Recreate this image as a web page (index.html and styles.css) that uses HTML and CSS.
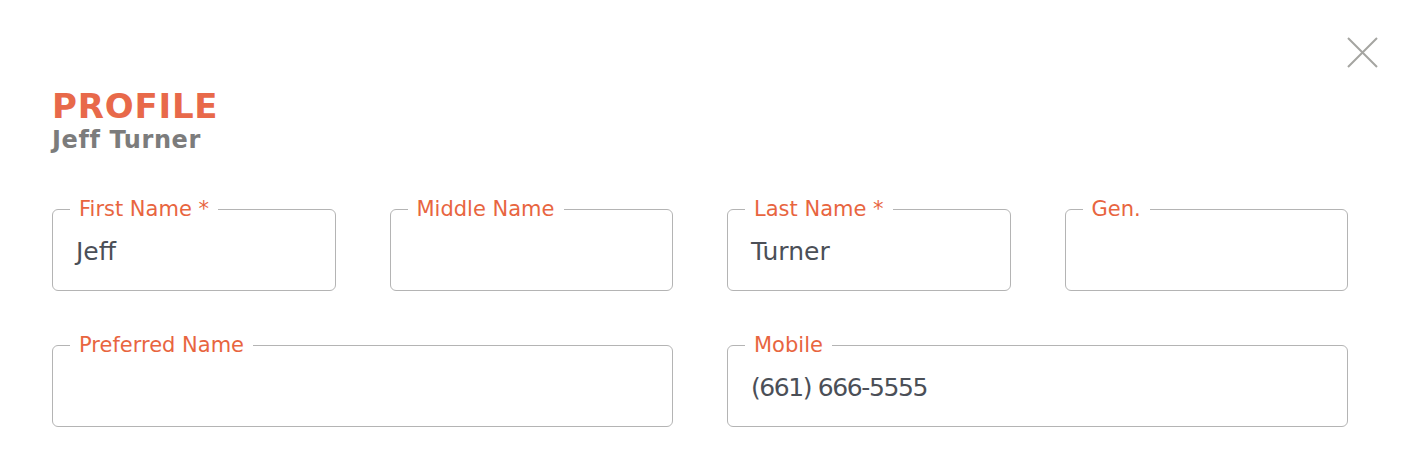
FILE: index.html
```html
<!DOCTYPE html>
<html lang="en">
<head>
<meta charset="utf-8">
<title>Profile</title>
<link rel="stylesheet" href="styles.css">
</head>
<body>
<div class="modal">
  <header class="modal-header">
    <div class="titles">
      <h1 class="title">PROFILE</h1>
      <h2 class="subtitle">Jeff Turner</h2>
    </div>
    <button class="close" type="button" aria-label="Close">
      <svg width="31" height="31" viewBox="0 0 31 31" aria-hidden="true">
        <path d="M1 1 L30 30 M30 1 L1 30" stroke="#a5a5a1" stroke-width="2" fill="none"/>
      </svg>
    </button>
  </header>
  <form class="form-grid">
    <fieldset class="field">
      <legend class="field-label">First Name *</legend>
      <div class="field-value">Jeff</div>
    </fieldset>
    <fieldset class="field">
      <legend class="field-label">Middle Name</legend>
      <div class="field-value"></div>
    </fieldset>
    <fieldset class="field">
      <legend class="field-label">Last Name *</legend>
      <div class="field-value">Turner</div>
    </fieldset>
    <fieldset class="field">
      <legend class="field-label">Gen.</legend>
      <div class="field-value"></div>
    </fieldset>
    <fieldset class="field field-wide">
      <legend class="field-label">Preferred Name</legend>
      <div class="field-value"></div>
    </fieldset>
    <fieldset class="field field-wide">
      <legend class="field-label">Mobile</legend>
      <div class="field-value field-value-phone">(661) 666-5555</div>
    </fieldset>
  </form>
</div>
</body>
</html>
```
FILE: styles.css
```css
* { box-sizing: border-box; }

html, body {
  margin: 0;
  padding: 0;
  background: #ffffff;
}

body {
  font-family: "DejaVu Sans", "Inter", sans-serif;
  width: 1410px;
  height: 470px;
  overflow: hidden;
}

.modal {
  padding: 37px 32px 0 52px;
}

.modal-header {
  display: flex;
  justify-content: space-between;
  align-items: flex-start;
}

.titles {
  margin-top: 50px;
}

.title {
  margin: 0;
  font-size: 34px;
  line-height: 38px;
  font-weight: 700;
  letter-spacing: 0.8px;
  color: #e8694a;
}

.subtitle {
  margin: 2px 0 0;
  font-size: 24px;
  line-height: 26px;
  font-weight: 700;
  letter-spacing: 0.6px;
  color: #7c7c7c;
}

.close {
  border: 0;
  background: none;
  padding: 0;
  margin: 0;
  width: 31px;
  height: 31px;
  cursor: pointer;
  display: block;
}

.close svg { display: block; }

.form-grid {
  display: grid;
  grid-template-columns: repeat(4, 1fr);
  column-gap: 54px;
  row-gap: 42px;
  width: 1296px;
  margin-top: 44px;
}

.field-wide {
  grid-column: span 2;
}

.field {
  margin: 0;
  min-width: 0;
  padding: 0 22px;
  border: 1px solid #b4b4b4;
  border-radius: 6px;
}

.field-label {
  margin-left: -5px;
  padding: 0 9px;
  font-size: 21px;
  line-height: 24px;
  color: #e8653f;
}

.field-value {
  padding-top: 16px;
  padding-bottom: 23px;
  padding-left: 1px;
  font-size: 25px;
  line-height: 30px;
  color: #4b4f57;
  min-height: 69px;
}

.field-value-phone {
  letter-spacing: -1.4px;
}
```
